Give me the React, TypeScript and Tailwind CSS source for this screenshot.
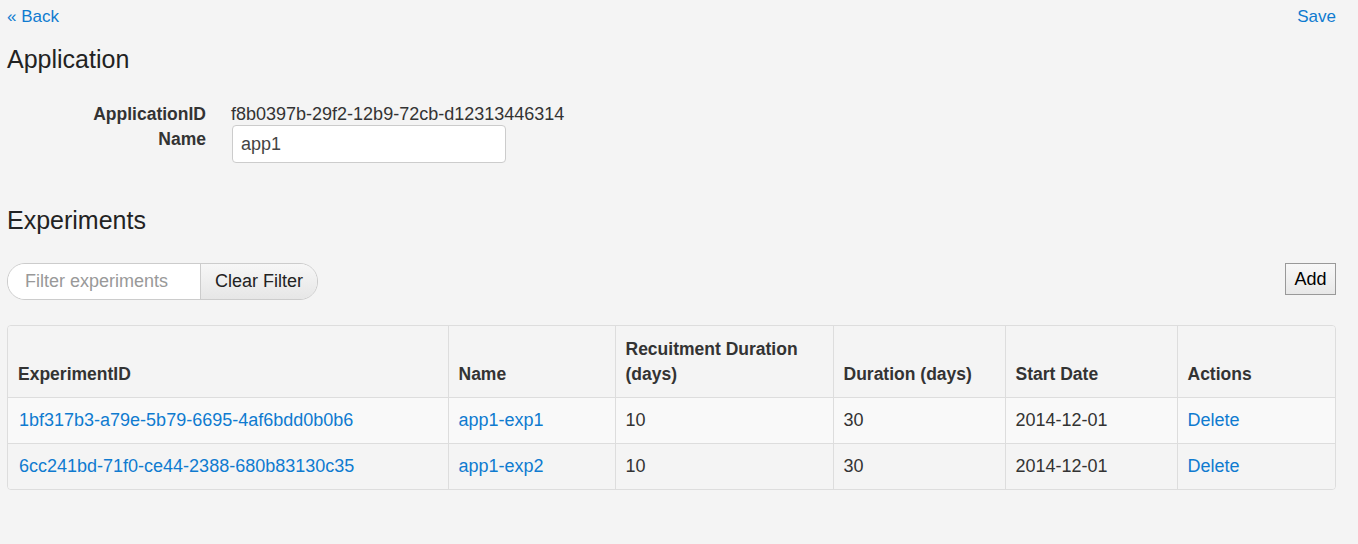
const experiments = [
  { id: '1bf317b3-a79e-5b79-6695-4af6bdd0b0b6', name: 'app1-exp1', recruit: 10, duration: 30, start: '2014-12-01' },
  { id: '6cc241bd-71f0-ce44-2388-680b83130c35', name: 'app1-exp2', recruit: 10, duration: 30, start: '2014-12-01' },
];

export default function App() {
  return (
    <div className="min-h-[544px] bg-[#f4f4f4] pl-[7px] pr-[22px] text-[18px] leading-[25px] text-[#333] font-['Liberation_Sans',Arial,sans-serif]">
      {/* top bar */}
      <div className="flex h-[32px] items-center justify-between text-[17px]">
        <a className="text-[#0f7bd0]" href="#">« Back</a>
        <a className="text-[#0f7bd0]" href="#">Save</a>
      </div>

      <h1 className="mt-[12px] text-[25px] leading-[30px] text-[#222]">Application</h1>

      {/* application form */}
      <div className="mt-[28px] grid grid-cols-[199px_1fr] gap-x-[25px]">
        <div className="text-right text-[17.5px] font-bold">ApplicationID</div>
        <div>f8b0397b-29f2-12b9-72cb-d12313446314</div>
        <div className="text-right text-[17.5px] font-bold">Name</div>
        <div className="-mt-[2px]">
          <input
            className="ml-px h-[38px] w-[274px] rounded-[4px] border border-[#ccc] bg-white px-[8px] text-[18px] text-[#444] outline-none"
            defaultValue="app1"
          />
        </div>
      </div>

      <h2 className="mt-[42px] text-[25px] leading-[30px] text-[#222]">Experiments</h2>

      {/* toolbar */}
      <div className="mt-[28px] flex items-start justify-between">
        <div className="flex h-[37px] overflow-hidden rounded-[18px] border border-[#ccc]">
          <input
            className="w-[192px] bg-white pl-[17px] text-[18px] outline-none placeholder:text-[#999]"
            placeholder="Filter experiments"
          />
          <button className="w-[117px] border-l border-[#ccc] bg-gradient-to-b from-[#f7f7f7] to-[#e6e6e6] text-[18px] text-[#222]">
            Clear Filter
          </button>
        </div>
        <button className="h-[32px] w-[51px] border border-[#999] bg-gradient-to-b from-[#f8f8f8] to-[#e8e8e8] text-[18px] text-black">
          Add
        </button>
      </div>

      {/* experiments table */}
      <div className="mt-[25px] overflow-hidden rounded-[4px] border border-[#ddd]">
        <table className="w-full table-fixed border-collapse">
          <colgroup>
            <col className="w-[440px]" />
            <col className="w-[167px]" />
            <col className="w-[218px]" />
            <col className="w-[172px]" />
            <col className="w-[172px]" />
            <col />
          </colgroup>
          <thead>
            <tr className="h-[71px] bg-[#f4f4f4]">
              {['ExperimentID', 'Name', 'Recuitment Duration (days)', 'Duration (days)', 'Start Date', 'Actions'].map((h, i) => (
                <th
                  key={h}
                  className={`border-b border-[#ddd] px-[10px] pb-[10px] text-left align-bottom text-[17.5px] font-bold ${i > 0 ? 'border-l' : ''}`}
                >
                  {h}
                </th>
              ))}
            </tr>
          </thead>
          <tbody>
            {experiments.map((e, idx) => (
              <tr key={e.id} className={`h-[46px] ${idx === 0 ? 'bg-[#f9f9f9]' : 'bg-[#f4f4f4]'}`}>
                <td className={`px-[11px] ${idx === 0 ? 'border-b border-[#ddd]' : ''}`}>
                  <a className="text-[#0f7bd0]" href="#">{e.id}</a>
                </td>
                <td className={`border-l border-[#ddd] px-[10px] ${idx === 0 ? 'border-b' : ''}`}>
                  <a className="text-[#0f7bd0]" href="#">{e.name}</a>
                </td>
                <td className={`border-l border-[#ddd] px-[10px] ${idx === 0 ? 'border-b' : ''}`}>{e.recruit}</td>
                <td className={`border-l border-[#ddd] px-[10px] ${idx === 0 ? 'border-b' : ''}`}>{e.duration}</td>
                <td className={`border-l border-[#ddd] px-[10px] ${idx === 0 ? 'border-b' : ''}`}>{e.start}</td>
                <td className={`border-l border-[#ddd] px-[10px] ${idx === 0 ? 'border-b' : ''}`}>
                  <a className="text-[#0f7bd0]" href="#">Delete</a>
                </td>
              </tr>
            ))}
          </tbody>
        </table>
      </div>
    </div>
  );
}
